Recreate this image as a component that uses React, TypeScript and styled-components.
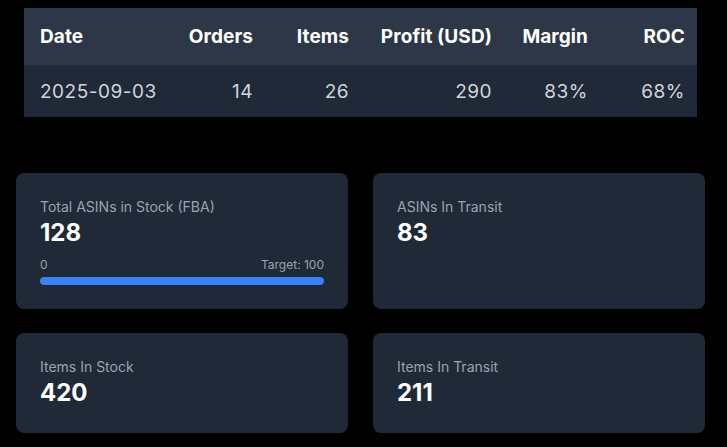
import React from 'react';
import styled, { createGlobalStyle } from 'styled-components';

const GlobalStyle = createGlobalStyle`
  * { box-sizing: border-box; }
  html, body {
    margin: 0;
    padding: 0;
    background: #000;
    font-family: Inter, "Noto Sans", "Liberation Sans", sans-serif;
  }
`;

const Page = styled.div`
  width: 727px;
  height: 447px;
  padding: 8px 22px 0 16px;
  display: flex;
  flex-direction: column;
  gap: 56px;
`;

const TableWrap = styled.div`
  margin: 0 8px;
`;

const Table = styled.table`
  width: 673px;
  border-collapse: collapse;
  table-layout: fixed;
`;

const HeadCell = styled.th<{ align?: 'left' | 'right' }>`
  background: #2d3748;
  color: #ffffff;
  font-size: 19px;
  font-weight: 700;
  letter-spacing: 0.1px;
  height: 57px;
  padding: 0 12px 0 ${p => (p.align === 'left' ? 16 : 4)}px;
  text-align: ${p => p.align || 'right'};
  white-space: nowrap;
`;

const BodyCell = styled.td<{ align?: 'left' | 'right' }>`
  background: #1f2937;
  color: #d1d5db;
  font-size: 19px;
  font-weight: 400;
  letter-spacing: 0.5px;
  height: 52px;
  padding: 0 12px 0 ${p => (p.align === 'left' ? 16 : 4)}px;
  text-align: ${p => p.align || 'right'};
  white-space: nowrap;
`;

const Grid = styled.div`
  display: grid;
  grid-template-columns: 332px 332px;
  gap: 24px;
  width: 689px;
  justify-content: space-between;
`;

const Card = styled.div`
  background: #1f2937;
  border-radius: 8px;
  padding: 24px;
  display: flex;
  flex-direction: column;
`;

const Label = styled.div`
  color: #9ca3af;
  font-size: 14px;
  line-height: 20px;
`;

const Value = styled.div`
  color: #ffffff;
  font-size: 24px;
  font-weight: 700;
  line-height: 32px;
`;

const Progress = styled.div`
  margin-top: 8px;
  display: flex;
  flex-direction: column;
  gap: 4px;
`;

const ProgressLabels = styled.div`
  display: flex;
  justify-content: space-between;
  color: #9ca3af;
  font-size: 12px;
  line-height: 16px;
`;

const Track = styled.div`
  height: 8px;
  border-radius: 4px;
  background: #374151;
  overflow: hidden;
`;

const Fill = styled.div`
  height: 100%;
  border-radius: 4px;
  background: #3b82f6;
`;

const columns = [
  { key: 'date', label: 'Date', width: 152, align: 'left' as const },
  { key: 'orders', label: 'Orders', width: 89 },
  { key: 'items', label: 'Items', width: 96 },
  { key: 'profit', label: 'Profit (USD)', width: 143 },
  { key: 'margin', label: 'Margin', width: 96 },
  { key: 'roc', label: 'ROC', width: 97 },
];

const row: Record<string, string> = {
  date: '2025-09-03',
  orders: '14',
  items: '26',
  profit: '290',
  margin: '83%',
  roc: '68%',
};

const stats = [
  { label: 'Total ASINs in Stock (FBA)', value: 128, target: 100 },
  { label: 'ASINs In Transit', value: 83 },
  { label: 'Items In Stock', value: 420 },
  { label: 'Items In Transit', value: 211 },
];

const App: React.FC = () => {
  return (
    <Page>
      <GlobalStyle />
      <TableWrap>
        <Table>
          <colgroup>
            {columns.map(c => (
              <col key={c.key} style={{ width: c.width }} />
            ))}
          </colgroup>
          <thead>
            <tr>
              {columns.map(c => (
                <HeadCell key={c.key} align={c.align}>{c.label}</HeadCell>
              ))}
            </tr>
          </thead>
          <tbody>
            <tr>
              {columns.map(c => (
                <BodyCell key={c.key} align={c.align}>{row[c.key]}</BodyCell>
              ))}
            </tr>
          </tbody>
        </Table>
      </TableWrap>
      <Grid>
        {stats.map(s => (
          <Card key={s.label}>
            <Label>{s.label}</Label>
            <Value>{s.value}</Value>
            {s.target !== undefined && (
              <Progress>
                <ProgressLabels>
                  <span>0</span>
                  <span>Target: {s.target}</span>
                </ProgressLabels>
                <Track>
                  <Fill style={{ width: `${Math.min(100, (s.value / s.target) * 100)}%` }} />
                </Track>
              </Progress>
            )}
          </Card>
        ))}
      </Grid>
    </Page>
  );
};

export default App;
